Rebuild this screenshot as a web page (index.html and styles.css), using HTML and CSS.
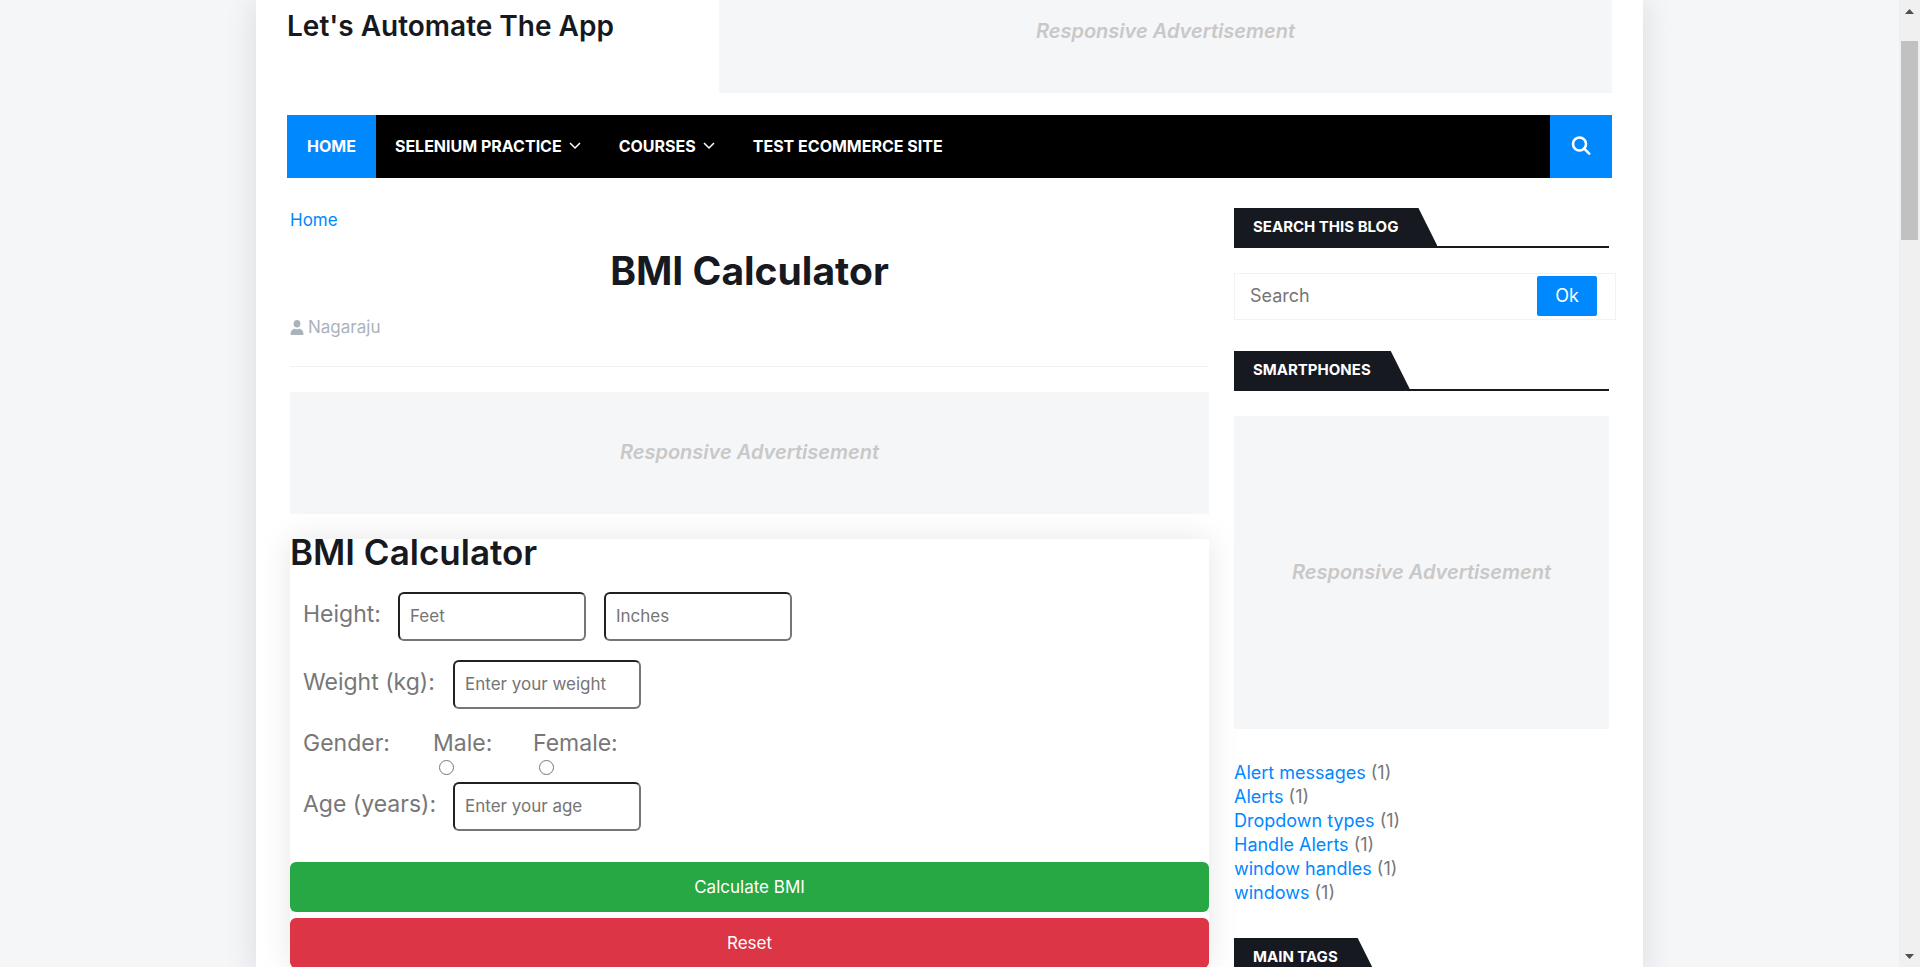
FILE: index.html
```html
<!DOCTYPE html>
<html lang="en">
<head>
<meta charset="utf-8">
<title>BMI Calculator</title>
<link rel="stylesheet" href="styles.css">
</head>
<body>
<div class="page">
  <header class="header">
    <p class="site-title">Let's Automate The App</p>
    <div class="ad ad-top">Responsive Advertisement</div>
  </header>
  <nav class="nav">
    <a class="nav-link active" href="#">HOME</a>
    <a class="nav-link" href="#">SELENIUM PRACTICE<svg class="chevron" viewBox="0 0 12 8"><path d="M1 1l5 5 5-5"/></svg></a>
    <a class="nav-link" href="#">COURSES<svg class="chevron" viewBox="0 0 12 8"><path d="M1 1l5 5 5-5"/></svg></a>
    <a class="nav-link" href="#">TEST ECOMMERCE SITE</a>
    <button class="nav-search" type="button" aria-label="Search"><svg viewBox="0 0 20 20"><circle cx="8.500" cy="8" r="6.500"/><path d="M13.200 12.700l5 5"/></svg></button>
  </nav>
  <div class="columns">
    <main class="main">
      <a class="crumb" href="#">Home</a>
      <h1 class="title">BMI Calculator</h1>
      <p class="author"><svg class="user" viewBox="0 0 14 16"><ellipse cx="7" cy="4" rx="3.600" ry="4"/><path d="M1 16q-1 0-.9-1.200a5.800 5.800 0 0 1 4-5.600q2.900 1.500 5.800 0a5.800 5.800 0 0 1 4 5.600q.1 1.200-.9 1.200z"/></svg>Nagaraju</p>
      <div class="ad ad-main">Responsive Advertisement</div>
      <form class="bmi">
        <h2 class="form-title">BMI Calculator</h2>
        <div class="row">
          <label class="label-height" for="feet">Height:</label>
          <input class="field" id="feet" type="text" placeholder="Feet">
          <input class="field" type="text" placeholder="Inches" aria-label="Inches">
        </div>
        <div class="row">
          <label class="label-long" for="weight">Weight (kg):</label>
          <input class="field" id="weight" type="text" placeholder="Enter your weight">
        </div>
        <div class="row gender">
          <span class="label-gender">Gender:</span>
          <label class="option">Male:<input type="radio" name="gender"></label>
          <label class="option">Female:<input type="radio" name="gender"></label>
        </div>
        <div class="row">
          <label class="label-long" for="age">Age (years):</label>
          <input class="field" id="age" type="text" placeholder="Enter your age">
        </div>
        <div class="actions">
          <button class="btn calculate" type="button">Calculate BMI</button>
          <button class="btn reset" type="reset">Reset</button>
        </div>
      </form>
    </main>
    <aside class="sidebar">
      <div class="heading"><h3>SEARCH THIS BLOG</h3></div>
      <form class="search">
        <input type="text" placeholder="Search" aria-label="Search this blog">
        <button type="button">Ok</button>
      </form>
      <div class="heading"><h3>SMARTPHONES</h3></div>
      <div class="ad ad-side">Responsive Advertisement</div>
      <ul class="labels">
        <li><a href="#">Alert messages</a> (1)</li>
        <li><a href="#">Alerts</a> (1)</li>
        <li><a href="#">Dropdown types</a> (1)</li>
        <li><a href="#">Handle Alerts</a> (1)</li>
        <li><a href="#">window handles</a> (1)</li>
        <li><a href="#">windows</a> (1)</li>
      </ul>
      <div class="heading"><h3>MAIN TAGS</h3></div>
    </aside>
  </div>
</div>
<div class="scrollbar">
  <svg viewBox="0 0 9 5"><path d="M0 5L4.500 0 9 5z"/></svg>
  <div class="thumb"></div>
  <svg viewBox="0 0 9 5"><path d="M0 0h9L4.500 5z"/></svg>
</div>
</body>
</html>
```
FILE: styles.css
```css
* { box-sizing: border-box; }
body {
  margin: 0;
  height: 100vh;
  overflow: hidden;
  padding: 0 277px 0 256px;
  background: #f5f6f8;
  color: #777;
  font: 17px/24px Inter, "Open Sans", sans-serif;
}
a { color: #0088ff; text-decoration: none; }
h1, h2, h3, p, ul { margin: 0; padding: 0; }
button, input { font: inherit; }
.page {
  min-height: 100vh;
  padding: 0 31px;
  background: #fff;
  box-shadow: 0 0 30px rgba(23, 26, 33, 0.12);
}
.header { display: flex; justify-content: space-between; }
.site-title {
  padding-top: 8px;
  color: #171921;
  font-size: 28px;
  font-weight: 600;
  line-height: 36px;
}
.ad {
  display: flex;
  align-items: center;
  justify-content: center;
  padding-bottom: 2px;
  background: #f5f6f8;
  color: #c8c8c8;
  font-size: 20px;
  font-style: italic;
  font-weight: 600;
}
.ad-top { width: 893px; height: 93px; padding-bottom: 31px; }
.nav {
  display: flex;
  margin-top: 22px;
  height: 63px;
  background: #000;
}
.nav-link {
  display: flex;
  align-items: center;
  gap: 7px;
  padding: 0 19px 2px;
  color: #fff;
  font-size: 16px;
  font-weight: 700;
}
.nav-link.active { padding: 0 20px 2px; background: #0088ff; }
.chevron { width: 12px; height: 8px; fill: none; stroke: #fff; stroke-width: 1.5; }
.nav-search {
  display: grid;
  place-items: center;
  width: 62px;
  margin-left: auto;
  padding-bottom: 3px;
  border: 0;
  background: #0088ff;
}
.nav-search svg { width: 20px; height: 20px; fill: none; stroke: #fff; stroke-width: 2.6; stroke-linecap: round; }
.columns {
  display: grid;
  grid-template-columns: minmax(0, 1fr) 375px;
  gap: 25px;
  padding: 30px 3px 0;
}
.crumb { display: block; }
.title {
  margin-top: 15px;
  color: #171921;
  font-size: 39px;
  font-weight: 700;
  line-height: 48px;
  text-align: center;
}
.author {
  display: flex;
  align-items: center;
  gap: 4px;
  padding: 20px 0 27px;
  border-bottom: 1px solid #f2f2f6;
  color: #aab3ba;
}
.user { width: 14px; height: 15px; fill: #aab3ba; }
.ad-main { height: 122px; margin-top: 25px; }
.bmi { margin-top: 25px; box-shadow: 0 0 30px rgba(0, 0, 0, 0.1); }
.form-title {
  margin-bottom: 27px;
  color: #171921;
  font-size: 35px;
  font-weight: 600;
  line-height: 26px;
}
.row {
  display: flex;
  align-items: center;
  gap: 18px;
  margin-bottom: 19px;
  padding-left: 13px;
  font-size: 23px;
}
.label-height { width: 77px; padding-bottom: 6px; }
.label-long { width: 132px; padding-bottom: 6px; white-space: nowrap; }
.field {
  width: 188px;
  height: 49px;
  padding: 0 10px 2px;
  border: 2px inset #767676;
  border-radius: 6px;
  font-size: 17px;
}
.gender { align-items: flex-start; gap: 0; margin-bottom: 7px; }
.gender > * { padding-top: 3px; }
.label-gender { width: 130px; }
.option { width: 100px; }
.option input { display: block; width: 15px; height: 15px; margin: 5px 0 0 6px; }
.actions { display: grid; gap: 6px; padding-top: 12px; }
.btn { height: 50px; border: 0; border-radius: 6px; color: #fff; }
.calculate { background: #28a745; }
.reset { background: #dc3545; }
.heading { height: 40px; border-bottom: 2px solid #171921; }
.heading h3 {
  width: fit-content;
  padding: 0 39px 0 19px;
  background: #171921;
  clip-path: polygon(0 0, calc(100% - 19px) 0, 100% 100%, 0 100%);
  color: #fff;
  font-size: 15px;
  font-weight: 700;
  line-height: 38px;
}
.search {
  display: flex;
  align-items: center;
  margin: 25px -7px 31px 0;
  padding: 2px 18px 3px 0;
  border: 1px solid #f2f2f6;
  font-size: 18px;
}
.search input { flex: 1; min-width: 0; padding: 0 15px; border: 0; outline: 0; }
.search button { width: 60px; height: 40px; border: 0; border-radius: 2px; background: #0088ff; color: #fff; }
.ad-side { height: 313px; margin-top: 25px; }
.labels { margin: 32px 0 33px; list-style: none; font-size: 18px; }
.scrollbar {
  position: fixed;
  inset: 0 0 0 auto;
  display: flex;
  flex-direction: column;
  align-items: center;
  width: 21px;
  padding: 9px 0 8px;
  background: #f0f0f0;
}
.scrollbar svg { width: 9px; height: 5px; fill: #505050; }
.thumb { width: 17px; height: 199px; margin: 27px 0 auto; background: #c1c1c1; }
::placeholder { color: #757575; opacity: 1; }
```
